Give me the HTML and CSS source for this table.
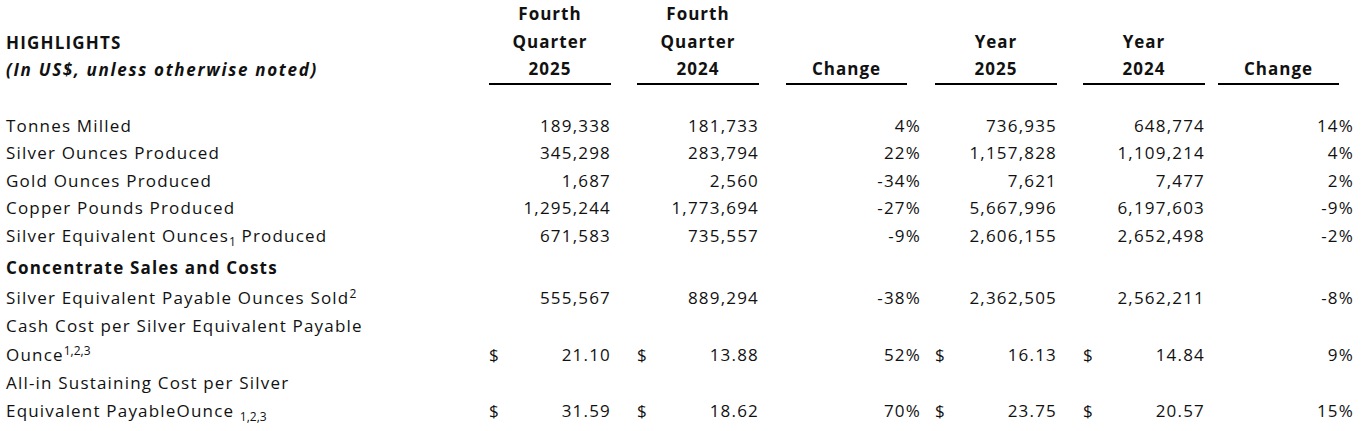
FILE: index.html
```html
<!DOCTYPE html>
<html lang="en">
<head>
<meta charset="utf-8">
<title>Highlights</title>
<link rel="stylesheet" href="styles.css">
</head>
<body>
<div class="table">
  <div class="row head">
    <div class="label headlabel">
      <div class="hl">HIGHLIGHTS</div>
      <div class="note">(In US$, unless otherwise noted)</div>
    </div>
    <div class="cell c1"><div class="h">Fourth<br>Quarter<br>2025</div></div>
    <div class="cell c2"><div class="h">Fourth<br>Quarter<br>2024</div></div>
    <div class="cell c3"><div class="h hc">Change</div></div>
    <div class="cell c4"><div class="h">Year<br>2025</div></div>
    <div class="cell c5"><div class="h">Year<br>2024</div></div>
    <div class="cell c6"><div class="h hc">Change</div></div>
  </div>

  <div class="spacer"></div>

  <div class="row">
    <div class="label">Tonnes Milled</div>
    <div class="cell c1"><span class="num">189,338</span></div>
    <div class="cell c2"><span class="num">181,733</span></div>
    <div class="cell c3"><span class="num">4%</span></div>
    <div class="cell c4"><span class="num">736,935</span></div>
    <div class="cell c5"><span class="num">648,774</span></div>
    <div class="cell c6"><span class="num">14%</span></div>
  </div>
  <div class="row">
    <div class="label">Silver Ounces Produced</div>
    <div class="cell c1"><span class="num">345,298</span></div>
    <div class="cell c2"><span class="num">283,794</span></div>
    <div class="cell c3"><span class="num">22%</span></div>
    <div class="cell c4"><span class="num">1,157,828</span></div>
    <div class="cell c5"><span class="num">1,109,214</span></div>
    <div class="cell c6"><span class="num">4%</span></div>
  </div>
  <div class="row">
    <div class="label">Gold Ounces Produced</div>
    <div class="cell c1"><span class="num">1,687</span></div>
    <div class="cell c2"><span class="num">2,560</span></div>
    <div class="cell c3"><span class="num">-34%</span></div>
    <div class="cell c4"><span class="num">7,621</span></div>
    <div class="cell c5"><span class="num">7,477</span></div>
    <div class="cell c6"><span class="num">2%</span></div>
  </div>
  <div class="row">
    <div class="label">Copper Pounds Produced</div>
    <div class="cell c1"><span class="num">1,295,244</span></div>
    <div class="cell c2"><span class="num">1,773,694</span></div>
    <div class="cell c3"><span class="num">-27%</span></div>
    <div class="cell c4"><span class="num">5,667,996</span></div>
    <div class="cell c5"><span class="num">6,197,603</span></div>
    <div class="cell c6"><span class="num">-9%</span></div>
  </div>
  <div class="row">
    <div class="label">Silver Equivalent Ounces<sub class="sb">1</sub> Produced</div>
    <div class="cell c1"><span class="num">671,583</span></div>
    <div class="cell c2"><span class="num">735,557</span></div>
    <div class="cell c3"><span class="num">-9%</span></div>
    <div class="cell c4"><span class="num">2,606,155</span></div>
    <div class="cell c5"><span class="num">2,652,498</span></div>
    <div class="cell c6"><span class="num">-2%</span></div>
  </div>
  <div class="row section">
    <div class="label bold">Concentrate Sales and Costs</div>
  </div>
  <div class="row">
    <div class="label">Silver Equivalent Payable Ounces Sold<sup class="sp">2</sup></div>
    <div class="cell c1"><span class="num">555,567</span></div>
    <div class="cell c2"><span class="num">889,294</span></div>
    <div class="cell c3"><span class="num">-38%</span></div>
    <div class="cell c4"><span class="num">2,362,505</span></div>
    <div class="cell c5"><span class="num">2,562,211</span></div>
    <div class="cell c6"><span class="num">-8%</span></div>
  </div>
  <div class="row tall">
    <div class="label">Cash Cost per Silver Equivalent Payable<br>Ounce<sup class="sp">1,2,3</sup></div>
    <div class="cell c1"><span class="cur">$</span><span class="num">21.10</span></div>
    <div class="cell c2"><span class="cur">$</span><span class="num">13.88</span></div>
    <div class="cell c3"><span class="num">52%</span></div>
    <div class="cell c4"><span class="cur">$</span><span class="num">16.13</span></div>
    <div class="cell c5"><span class="cur">$</span><span class="num">14.84</span></div>
    <div class="cell c6"><span class="num">9%</span></div>
  </div>
  <div class="row tall last">
    <div class="label">All-in Sustaining Cost per Silver<br>Equivalent PayableOunce <sub class="sb">1,2,3</sub></div>
    <div class="cell c1"><span class="cur">$</span><span class="num">31.59</span></div>
    <div class="cell c2"><span class="cur">$</span><span class="num">18.62</span></div>
    <div class="cell c3"><span class="num">70%</span></div>
    <div class="cell c4"><span class="cur">$</span><span class="num">23.75</span></div>
    <div class="cell c5"><span class="cur">$</span><span class="num">20.57</span></div>
    <div class="cell c6"><span class="num">15%</span></div>
  </div>
</div>
</body>
</html>
```

FILE: styles.css
```css
html, body {
  margin: 0;
  padding: 0;
  background: #ffffff;
}

body {
  font-family: "Open Sans", "Liberation Sans", sans-serif;
  font-size: 17px;
  letter-spacing: 0.07em;
  color: #111111;
}

.table {
  padding-left: 6px;
  width: 1348px;
}

.row {
  display: grid;
  grid-template-columns: 483px 122px 148px 162px 136px 148px 149px;
  line-height: 27.5px;
  align-items: end;
}

.label {
  white-space: nowrap;
}

.cell {
  display: flex;
  align-items: flex-end;
  justify-content: space-between;
  white-space: nowrap;
}

.c2, .c5 { padding-left: 26px; }
.c3 { padding-left: 27px; }
.c4 { padding-left: 14px; }
.c6 { padding-left: 13px; }

.num {
  margin-left: auto;
}

.head {
  font-weight: 700;
}

.headlabel {
  padding-bottom: 1px;
}

.note {
  font-style: italic;
  letter-spacing: 0.1em;
}

.h {
  width: 122px;
  text-align: center;
  border-bottom: 2px solid #000000;
  letter-spacing: 0.06em;
}

.hc {
  width: 121px;
}

.spacer {
  height: 27px;
}

.section {
  padding-top: 5px;
  padding-bottom: 2px;
}

.bold {
  font-weight: 700;
}

.tall {
  line-height: 29px;
}

.last {
  line-height: 28px;
}

.sp, .sb {
  font-size: 12px;
  line-height: 0;
  letter-spacing: 0;
}

.sp {
  vertical-align: 6px;
}

.sb {
  vertical-align: -4px;
}
```
